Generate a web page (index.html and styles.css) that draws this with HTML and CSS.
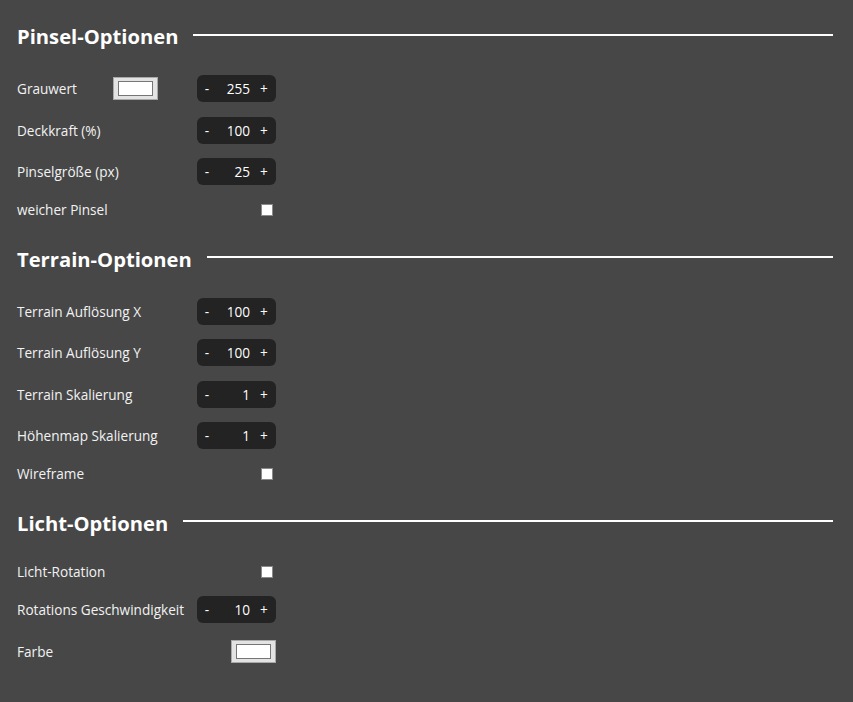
FILE: index.html
```html
<!DOCTYPE html>
<html lang="de">
<head>
<meta charset="utf-8">
<title>Optionen</title>
<link rel="stylesheet" href="styles.css">
</head>
<body>
<div class="panel">
  <section class="section">
    <h2 class="heading"><span class="heading-text">Pinsel-Optionen</span><span class="heading-line"></span></h2>
    <div class="rows">
      <div class="row">
        <div class="row-left"><span class="label label-fixed">Grauwert</span><span class="swatch"><span class="swatch-inner"></span></span></div>
        <div class="stepper"><span class="step-btn">-</span><span class="step-value">255</span><span class="step-btn">+</span></div>
      </div>
      <div class="row">
        <span class="label">Deckkraft (%)</span>
        <div class="stepper"><span class="step-btn">-</span><span class="step-value">100</span><span class="step-btn">+</span></div>
      </div>
      <div class="row">
        <span class="label">Pinselgröße (px)</span>
        <div class="stepper"><span class="step-btn">-</span><span class="step-value">25</span><span class="step-btn">+</span></div>
      </div>
      <div class="row row-check">
        <span class="label">weicher Pinsel</span>
        <span class="checkbox"></span>
      </div>
    </div>
  </section>
  <section class="section">
    <h2 class="heading"><span class="heading-text">Terrain-Optionen</span><span class="heading-line"></span></h2>
    <div class="rows">
      <div class="row">
        <span class="label">Terrain Auflösung X</span>
        <div class="stepper"><span class="step-btn">-</span><span class="step-value">100</span><span class="step-btn">+</span></div>
      </div>
      <div class="row">
        <span class="label">Terrain Auflösung Y</span>
        <div class="stepper"><span class="step-btn">-</span><span class="step-value">100</span><span class="step-btn">+</span></div>
      </div>
      <div class="row">
        <span class="label">Terrain Skalierung</span>
        <div class="stepper"><span class="step-btn">-</span><span class="step-value">1</span><span class="step-btn">+</span></div>
      </div>
      <div class="row">
        <span class="label">Höhenmap Skalierung</span>
        <div class="stepper"><span class="step-btn">-</span><span class="step-value">1</span><span class="step-btn">+</span></div>
      </div>
      <div class="row row-check">
        <span class="label">Wireframe</span>
        <span class="checkbox"></span>
      </div>
    </div>
  </section>
  <section class="section">
    <h2 class="heading"><span class="heading-text">Licht-Optionen</span><span class="heading-line"></span></h2>
    <div class="rows">
      <div class="row row-check">
        <span class="label">Licht-Rotation</span>
        <span class="checkbox"></span>
      </div>
      <div class="row">
        <span class="label">Rotations Geschwindigkeit</span>
        <div class="stepper"><span class="step-btn">-</span><span class="step-value">10</span><span class="step-btn">+</span></div>
      </div>
      <div class="row">
        <span class="label">Farbe</span>
        <span class="swatch"><span class="swatch-inner"></span></span>
      </div>
    </div>
  </section>
</div>
</body>
</html>
```

FILE: styles.css
```css
html, body {
  margin: 0;
  padding: 0;
  background: #474747;
}
body {
  width: 853px;
  height: 702px;
  overflow: hidden;
  font-family: "Open Sans", "Noto Sans", sans-serif;
  color: #f2f2f2;
}
.panel {
  padding: 21px 20px 0 17px;
}
.section {
  margin-bottom: 24px;
}
.heading {
  display: flex;
  align-items: center;
  height: 30px;
  margin: 0 0 24px 0;
  font-size: 20.2px;
  font-weight: 700;
  line-height: 30px;
  color: #ffffff;
}
.heading-text {
  white-space: nowrap;
}
.heading-line {
  flex: 1;
  height: 2px;
  margin-left: 15px;
  margin-top: -3px;
  background: #ffffff;
}
.rows {
  display: flex;
  flex-direction: column;
  gap: 14.5px;
  width: 259px;
}
.row {
  display: flex;
  align-items: center;
  justify-content: space-between;
  height: 27px;
}
.row-check {
  height: 20px;
}
.row-left {
  display: flex;
  align-items: center;
}
.label {
  font-size: 13.6px;
  white-space: nowrap;
}
.label-fixed {
  width: 96px;
}
.stepper {
  display: flex;
  align-items: center;
  width: 79px;
  height: 27px;
  box-sizing: border-box;
  padding: 0 6px 0 4px;
  border-radius: 6px;
  background: #232323;
  font-size: 13.6px;
  color: #ffffff;
}
.step-btn {
  width: 12px;
  text-align: center;
}
.step-value {
  flex: 1;
  text-align: right;
  padding-right: 8px;
}
.swatch {
  display: block;
  width: 45px;
  height: 23px;
  box-sizing: border-box;
  padding: 3px 4px;
  border: 1px solid #a9a9a9;
  background: #e3e3e3;
}
.swatch-inner {
  display: block;
  height: 100%;
  box-sizing: border-box;
  border: 1px solid #767676;
  background: #ffffff;
}
.checkbox {
  display: block;
  width: 12px;
  height: 12px;
  box-sizing: border-box;
  margin-right: 3px;
  border: 1px solid #8a8a8a;
  background: #ffffff;
}
```
